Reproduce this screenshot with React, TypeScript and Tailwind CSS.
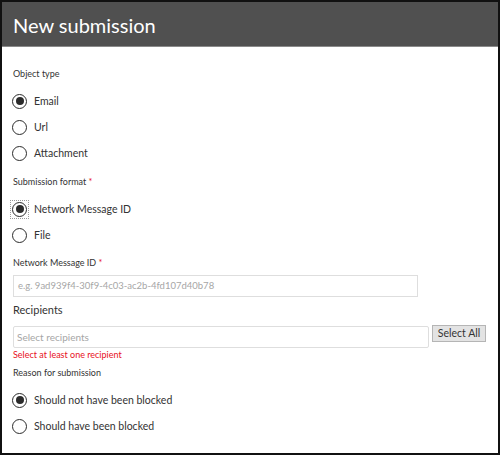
const font = { fontFamily: 'Lato, "Noto Sans", sans-serif' };

function Radio({ label, checked, focus }: { label: string; checked?: boolean; focus?: boolean }) {
  return (
    <div className="flex h-[26px] items-center">
      <span
        className={
          "-m-[2px] flex p-[1px] " + (focus ? "outline outline-1 outline-dotted outline-[#9a9a9a]" : "")
        }
      >
        <span className="flex h-[15px] w-[15px] items-center justify-center rounded-full border-[1.5px] border-[#2b2b2b] bg-white">
          {checked ? <span className="h-[8px] w-[8px] rounded-full bg-[#2b2b2b]" /> : null}
        </span>
      </span>
      <span className="ml-[8px] text-[10.5px] leading-[14px] text-[#333]">{label}</span>
    </div>
  );
}

function Label({ text, required }: { text: string; required?: boolean }) {
  return (
    <p className="text-[9px] leading-[12px] text-[#333]">
      {text}
      {required ? <span className="text-[#e81123]"> *</span> : null}
    </p>
  );
}

export default function App() {
  return (
    <div className="h-[455px] w-[500px] border-2 border-[#111] bg-white" style={font}>
      <div className="flex h-[45px] items-center border-b border-[#8a8a8a] bg-[#505050] px-[11px]">
        <h1 className="mt-[1px] text-[20px] leading-none font-normal text-white">New submission</h1>
      </div>

      <div className="px-[11px] pt-[21px]">
        <Label text="Object type" />
        <div className="mt-[8px] flex flex-col">
          <Radio label="Email" checked />
          <Radio label="Url" />
          <Radio label="Attachment" />
        </div>

        <div className="mt-[10px]">
          <Label text="Submission format" required />
        </div>
        <div className="mt-[8px] flex flex-col">
          <Radio label="Network Message ID" checked focus />
          <Radio label="File" />
        </div>

        <div className="mt-[9px]">
          <Label text="Network Message ID" required />
        </div>
        <div className="mt-[6px] flex h-[22px] w-[405px] items-center border border-[#dedede] px-[4px] text-[9.5px] text-[#a6a6a6]">
          e.g. 9ad939f4-30f9-4c03-ac2b-4fd107d40b78
        </div>

        <p className="mt-[6px] text-[11px] leading-[14px] text-[#333]">Recipients</p>
        <div className="mt-[9px] flex items-start gap-[3px]">
          <div className="flex h-[22px] w-[416px] items-center rounded-[2px] border border-[#dedede] px-[3px] text-[10px] text-[#a6a6a6]">
            Select recipients
          </div>
          <button className="-mt-[1px] h-[17px] w-[54px] border border-[#b5b5b5] bg-[#e3e3e3] text-[10.5px] leading-none whitespace-nowrap text-[#333]">
            Select All
          </button>
        </div>
        <p className="mt-[1px] text-[9px] leading-[12px] text-[#e81123]">Select at least one recipient</p>

        <div className="mt-[6px]">
          <Label text="Reason for submission" />
        </div>
        <div className="mt-[8px] flex flex-col">
          <Radio label="Should not have been blocked" checked />
          <Radio label="Should have been blocked" />
        </div>
      </div>
    </div>
  );
}
